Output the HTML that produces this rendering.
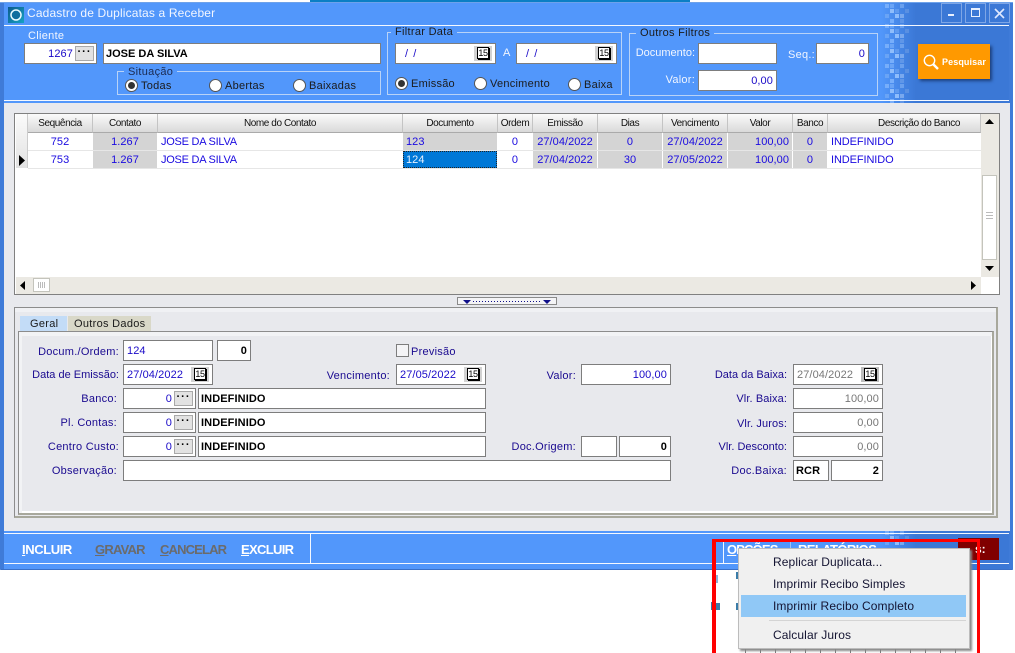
<!DOCTYPE html>
<html lang="pt"><head><meta charset="utf-8"><title>Cadastro de Duplicatas a Receber</title>
<style>
html,body{margin:0;padding:0;background:#fff;height:653px;overflow:hidden}
body{position:relative;width:1015px;font:11px "Liberation Sans",sans-serif;color:#1a0a90}
div,span,svg{position:absolute;box-sizing:border-box}
.t{white-space:nowrap;line-height:14px;letter-spacing:.25px;margin-top:1px}
.w{color:#f2f6ff}
.b{color:#1b1b1b}
.f{background:#fff;border:1px solid #7d7d7d;line-height:20px;padding:0 3px;white-space:nowrap;color:#1a0ac8;letter-spacing:.1px}
.r{text-align:right}
.bd{font-weight:bold;color:#000}
.dis{color:#777}
.g{border:1px solid #b9d3f7}
.lg{background:#5297fb;padding:0 4px;line-height:12px;white-space:nowrap;color:#f2f6ff;letter-spacing:.3px}
.rd{width:13px;height:13px;border-radius:50%;background:#fff;border:1px solid #555}
.rd.on:after{content:"";position:absolute;left:2px;top:2px;width:7px;height:7px;border-radius:50%;background:#333}
.cal{width:18px;height:15px;background:#d2d2d2}
.cal span{left:3px;top:1px;width:12px;height:12px;background:#fff;border:1px solid #000;box-shadow:1px 1px 0 #000;font:9px/11px "Liberation Sans",sans-serif;color:#000;text-align:center;letter-spacing:-.4px}
.dots{width:19px;height:15px;background:#e2e2e2;border:1px solid #a9a9a9;color:#000;font:bold 11px/11px "Liberation Sans",sans-serif;text-align:center;letter-spacing:1px}
.h{top:114px;height:19px;background:linear-gradient(#fbfbfb,#d9d9d9);border-right:1px solid #c4c4c4;border-bottom:1px solid #aaa;font-size:10px;line-height:19px;text-align:center;color:#111;letter-spacing:-.42px;white-space:nowrap}
.c{height:17px;line-height:19px;color:#1a0ae0;white-space:nowrap;letter-spacing:.05px;text-align:center}
.gc{background:#d4d4d4}
.l{text-align:left;padding-left:3px}
.rr{text-align:right;padding-right:3px}
.tb{font:bold 13px/16px "Liberation Sans",sans-serif;color:#fff;top:542px;white-space:nowrap}
.tb u{text-underline-offset:1px}
.gy{color:#6b6b6b}
.m{left:773px;font-size:12px;line-height:16px;color:#141432;white-space:nowrap;letter-spacing:.1px}
</style></head><body>

<div style="left:310px;top:0;width:380px;height:2px;background:#0b7fc4"></div>

<!-- window -->
<div style="left:0;top:2px;width:1013px;height:568px;background:linear-gradient(90deg,#5297fb 0,#5297fb 880px,#3b78d6 915px,#3b78d6 100%);border:1px solid #6ea2ea;border-bottom:1px solid #3a70c8"></div>
<div style="left:0;top:3px;width:4px;height:566px;background:#3f7bd8"></div>
<div style="left:1009px;top:3px;width:4px;height:566px;background:#3f7bd8"></div>

<!-- pixel pattern -->
<svg style="left:883px;top:3px" width="30" height="100" viewBox="0 0 30 100">
<defs><pattern id="px" width="30" height="20" patternUnits="userSpaceOnUse">
<rect x="2" y="1" width="4" height="4" fill="#77aefb"/><rect x="7" y="1" width="4" height="4" fill="#6aa4f6"/><rect x="17" y="1" width="4" height="4" fill="#6aa0ee"/>
<rect x="7" y="6" width="4" height="4" fill="#8fbdfc"/><rect x="12" y="6" width="4" height="4" fill="#5f9af0"/><rect x="22" y="6" width="4" height="4" fill="#5a90e2"/>
<rect x="2" y="11" width="4" height="4" fill="#6aa4f6"/><rect x="12" y="11" width="4" height="4" fill="#8fbdfc"/><rect x="17" y="11" width="4" height="4" fill="#79a8ee"/>
<rect x="7" y="16" width="4" height="4" fill="#77aefb"/><rect x="17" y="16" width="4" height="4" fill="#5f96e8"/>
</pattern></defs>
<rect width="30" height="100" fill="url(#px)"/></svg>
<svg style="left:883px;top:530px" width="30" height="16" viewBox="0 0 30 16"><rect width="30" height="16" fill="url(#px)"/></svg>

<!-- title -->
<div style="left:8px;top:7px;width:16px;height:16px;background:linear-gradient(135deg,#0c5a8c,#16a3c4)"></div>
<svg style="left:8px;top:7px" width="16" height="16"><circle cx="8" cy="8" r="5" fill="#0f6f9f" stroke="#e8fbff" stroke-width="1.5"/></svg>
<div class="t w" style="left:27px;top:5px;font-size:12px;line-height:14px;letter-spacing:.15px">Cadastro de Duplicatas a Receber</div>
<div style="left:941px;top:3px;width:21px;height:20px;border:1px solid #7ea6e6"></div>
<div style="left:965px;top:3px;width:21px;height:20px;border:1px solid #7ea6e6"></div>
<div style="left:989px;top:3px;width:21px;height:20px;border:1px solid #7ea6e6"></div>
<div style="left:948px;top:14px;width:6px;height:2px;background:#e8f0ff"></div>
<div style="left:971px;top:8px;width:9px;height:9px;border:1px solid #e8f0ff;border-top-width:2px"></div>
<svg style="left:994px;top:8px" width="11" height="11"><path d="M1 1L10 10M10 1L1 10" stroke="#dfe9ff" stroke-width="1.6"/></svg>
<div style="left:4px;top:25px;width:1005px;height:1px;background:#f4f8ff"></div>

<!-- header -->
<div class="t w" style="left:28px;top:28px;letter-spacing:.3px">Cliente</div>
<div class="f r" style="left:24px;top:43px;width:73px;height:21px;padding-right:23px">1267</div>
<div class="dots" style="left:75px;top:46px;height:15px">···</div>
<div class="f bd" style="left:103px;top:43px;width:278px;height:21px;padding-left:2px;letter-spacing:0">JOSE DA SILVA</div>

<div class="g" style="left:117px;top:71px;width:264px;height:24px"></div>
<div class="lg" style="left:124px;top:66px;font-size:11px;color:#1b2a50">Situação</div>
<div class="rd on" style="left:125px;top:79px"></div><div class="t b" style="left:141px;top:78px">Todas</div>
<div class="rd" style="left:209px;top:79px"></div><div class="t b" style="left:225px;top:78px">Abertas</div>
<div class="rd" style="left:293px;top:79px"></div><div class="t b" style="left:309px;top:78px">Baixadas</div>

<div class="g" style="left:387px;top:32px;width:235px;height:63px"></div>
<div class="lg" style="left:391px;top:26px;color:#1b1b1b">Filtrar Data</div>
<div class="f" style="left:395px;top:43px;width:101px;height:21px;padding-left:9px;word-spacing:2px">/ /</div>
<div class="cal" style="left:474px;top:46px"><span>15</span></div>
<div class="t w" style="left:503px;top:45px">A</div>
<div class="f" style="left:516px;top:43px;width:101px;height:21px;padding-left:9px;word-spacing:2px">/ /</div>
<div class="cal" style="left:595px;top:46px"><span>15</span></div>
<div class="rd on" style="left:395px;top:77px"></div><div class="t b" style="left:411px;top:76px">Emissão</div>
<div class="rd" style="left:474px;top:77px"></div><div class="t b" style="left:490px;top:76px">Vencimento</div>
<div class="rd" style="left:568px;top:78px"></div><div class="t b" style="left:584px;top:77px">Baixa</div>

<div class="g" style="left:629px;top:33px;width:249px;height:63px"></div>
<div class="lg" style="left:636px;top:27px;color:#1b1b1b">Outros Filtros</div>
<div class="t w" style="right:320px;top:45px;letter-spacing:0">Documento:</div>
<div class="f" style="left:698px;top:43px;width:79px;height:21px"></div>
<div class="t w" style="left:788px;top:47px">Seq.:</div>
<div class="f r" style="left:816px;top:43px;width:53px;height:21px">0</div>
<div class="t w" style="right:320px;top:72px">Valor:</div>
<div class="f r" style="left:698px;top:70px;width:79px;height:21px">0,00</div>

<div style="left:918px;top:44px;width:72px;height:35px;background:#ff9900;box-shadow:2px 2px 3px #1c3f7c"></div>
<svg style="left:922px;top:53px" width="18" height="18"><circle cx="7.5" cy="7.5" r="5.2" fill="none" stroke="#fff" stroke-width="1.4"/><path d="M11.5 11.5L16 16" stroke="#fff" stroke-width="2.4"/></svg>
<div class="t" style="left:942px;top:54px;font-weight:bold;font-size:9px;color:#fff;letter-spacing:.1px">Pesquisar</div>

<div style="left:4px;top:100px;width:1005px;height:1px;background:#f4f8ff"></div>

<!-- content -->
<div style="left:4px;top:103px;width:1006px;height:428px;background:#e8e9ed"></div>

<!-- grid -->
<div style="left:14px;top:113px;width:986px;height:182px;background:#fff;border:1px solid #808080"></div>
<div style="left:16px;top:114px;width:12px;height:54px;background:linear-gradient(#fbfbfb,#e2e2e2);border-right:1px solid #ccc"></div>
<div class="h" style="left:28px;width:65px">Sequência</div>
<div class="h" style="left:93px;width:65px">Contato</div>
<div class="h" style="left:158px;width:245px">Nome do Contato</div>
<div class="h" style="left:403px;width:95px">Documento</div>
<div class="h" style="left:498px;width:35px">Ordem</div>
<div class="h" style="left:533px;width:65px">Emissão</div>
<div class="h" style="left:598px;width:65px">Dias</div>
<div class="h" style="left:663px;width:65px">Vencimento</div>
<div class="h" style="left:728px;width:65px">Valor</div>
<div class="h" style="left:793px;width:35px">Banco</div>
<div class="h" style="left:828px;width:153px;padding-left:30px">Descrição do Banco</div>

<div style="left:28px;top:150px;width:953px;height:1px;background:#e6e6e6"></div>
<div style="left:28px;top:168px;width:953px;height:1px;background:#e6e6e6"></div>

<div class="c" style="left:28px;top:133px;width:64px">752</div>
<div class="c gc" style="left:93px;top:133px;width:64px">1.267</div>
<div class="c l" style="left:158px;top:133px;width:244px;letter-spacing:-.25px">JOSE DA SILVA</div>
<div class="c gc l" style="left:403px;top:133px;width:94px">123</div>
<div class="c" style="left:498px;top:133px;width:34px">0</div>
<div class="c gc" style="left:533px;top:133px;width:64px">27/04/2022</div>
<div class="c gc" style="left:598px;top:133px;width:64px">0</div>
<div class="c gc" style="left:663px;top:133px;width:64px">27/04/2022</div>
<div class="c gc rr" style="left:728px;top:133px;width:64px">100,00</div>
<div class="c gc" style="left:793px;top:133px;width:34px">0</div>
<div class="c l" style="left:828px;top:133px;width:153px;letter-spacing:-.1px">INDEFINIDO</div>

<svg style="left:19px;top:155px" width="7" height="11"><path d="M0 0L6 5.5L0 11Z" fill="#000"/></svg>
<div class="c" style="left:28px;top:151px;width:64px">753</div>
<div class="c gc" style="left:93px;top:151px;width:64px">1.267</div>
<div class="c l" style="left:158px;top:151px;width:244px;letter-spacing:-.25px">JOSE DA SILVA</div>
<div class="c l" style="left:403px;top:151px;width:94px;background:#0078d7;color:#e4f0ff;outline:1px dotted #222;outline-offset:-1px">124</div>
<div class="c" style="left:498px;top:151px;width:34px">0</div>
<div class="c gc" style="left:533px;top:151px;width:64px">27/04/2022</div>
<div class="c gc" style="left:598px;top:151px;width:64px">30</div>
<div class="c gc" style="left:663px;top:151px;width:64px">27/05/2022</div>
<div class="c gc rr" style="left:728px;top:151px;width:64px">100,00</div>
<div class="c gc" style="left:793px;top:151px;width:34px">0</div>
<div class="c l" style="left:828px;top:151px;width:153px;letter-spacing:-.1px">INDEFINIDO</div>

<!-- vertical scrollbar -->
<div style="left:981px;top:114px;width:18px;height:163px;background:#ebe9e3"></div>
<svg style="left:985px;top:119px" width="9" height="5"><path d="M4.5 0L9 5H0Z" fill="#000"/></svg>
<div style="left:982px;top:175px;width:15px;height:85px;background:#fff;border:1px solid #c4c4bc"></div>
<div style="left:986px;top:212px;width:7px;height:7px;border-top:1px solid #bbb;border-bottom:1px solid #bbb"></div>
<div style="left:986px;top:215px;width:7px;height:1px;background:#bbb"></div>
<svg style="left:985px;top:266px" width="9" height="5"><path d="M0 0H9L4.5 5Z" fill="#000"/></svg>
<!-- horizontal scrollbar -->
<div style="left:16px;top:277px;width:965px;height:17px;background:#ebe9e3"></div>
<svg style="left:20px;top:281px" width="5" height="9"><path d="M5 0L0 4.5L5 9Z" fill="#000"/></svg>
<div style="left:33px;top:278px;width:17px;height:14px;background:#fff;border:1px solid #c4c4bc"></div>
<div style="left:38px;top:282px;width:7px;height:6px;background:repeating-linear-gradient(90deg,#bbb 0 1px,#fff 1px 2px)"></div>
<svg style="left:971px;top:281px" width="5" height="9"><path d="M0 0L5 4.5L0 9Z" fill="#000"/></svg>

<!-- splitter -->
<div style="left:457px;top:297px;width:100px;height:8px;background:#f4f4f6;border:1px solid #8a8a8a"></div>
<svg style="left:463px;top:300px" width="8" height="4"><path d="M0 0H8L4 4Z" fill="#10108a"/></svg>
<svg style="left:543px;top:300px" width="8" height="4"><path d="M0 0H8L4 4Z" fill="#10108a"/></svg>
<div style="left:473px;top:301px;width:68px;height:1px;background:repeating-linear-gradient(90deg,#10108a 0 1px,transparent 1px 3px)"></div>

<!-- tab panel -->
<div style="left:14px;top:307px;width:984px;height:211px;background:#e8e9ed;border:1px solid #8c8c8c;border-right:2px solid #a8a89c;border-bottom:2px solid #a8a89c;box-shadow:inset 0 4px 0 #f0f1f4"></div>
<div style="left:20px;top:316px;width:47px;height:15px;background:#c3dcf7"></div>
<div style="left:68px;top:316px;width:83px;height:15px;background:#d9d8c8"></div>
<div class="t b" style="left:30px;top:316px;letter-spacing:.3px">Geral</div>
<div class="t b" style="left:74px;top:316px;letter-spacing:.3px">Outros Dados</div>
<div style="left:18px;top:331px;width:976px;height:184px;border:1px solid #8c8c8c;border-right:2px solid #a8a89c;border-bottom:2px solid #a8a89c;box-shadow:inset 3px 4px 0 #f2f3f5,inset -1px -2px 0 #fff"></div>

<!-- form -->
<div class="t" style="right:896px;top:344px">Docum./Ordem:</div>
<div class="f" style="left:123px;top:340px;width:90px;height:21px">124</div>
<div class="f r bd" style="left:217px;top:340px;width:34px;height:21px">0</div>
<div style="left:396px;top:344px;width:13px;height:13px;background:#f4f4f6;border:1px solid #7d7d7d"></div>
<div class="t" style="left:411px;top:344px">Previsão</div>

<div class="t" style="right:896px;top:367px;letter-spacing:0">Data de Emissão:</div>
<div class="f" style="left:123px;top:364px;width:90px;height:21px">27/04/2022</div>
<div class="cal" style="left:191px;top:367px"><span>15</span></div>
<div class="t" style="right:625px;top:368px">Vencimento:</div>
<div class="f" style="left:396px;top:364px;width:90px;height:21px">27/05/2022</div>
<div class="cal" style="left:464px;top:367px"><span>15</span></div>
<div class="t" style="right:439px;top:368px">Valor:</div>
<div class="f r" style="left:581px;top:364px;width:90px;height:21px">100,00</div>
<div class="t" style="right:228px;top:367px;letter-spacing:0">Data da Baixa:</div>
<div class="f dis" style="left:793px;top:364px;width:90px;height:21px">27/04/2022</div>
<div class="cal" style="left:861px;top:367px;background:#bdbdbd"><span>15</span></div>

<div class="t" style="right:898px;top:391px">Banco:</div>
<div class="f r" style="left:123px;top:388px;width:73px;height:21px;padding-right:23px">0</div>
<div class="dots" style="left:174px;top:391px">···</div>
<div class="f bd" style="left:198px;top:388px;width:288px;height:21px;padding-left:2px">INDEFINIDO</div>
<div class="t" style="right:228px;top:391px;letter-spacing:.1px">Vlr. Baixa:</div>
<div class="f r dis" style="left:793px;top:388px;width:90px;height:21px">100,00</div>

<div class="t" style="right:898px;top:415px">Pl. Contas:</div>
<div class="f r" style="left:123px;top:412px;width:73px;height:21px;padding-right:23px">0</div>
<div class="dots" style="left:174px;top:415px">···</div>
<div class="f bd" style="left:198px;top:412px;width:288px;height:21px;padding-left:2px">INDEFINIDO</div>
<div class="t" style="right:228px;top:416px;letter-spacing:.1px">Vlr. Juros:</div>
<div class="f r dis" style="left:793px;top:412px;width:90px;height:21px">0,00</div>

<div class="t" style="right:896px;top:439px">Centro Custo:</div>
<div class="f r" style="left:123px;top:436px;width:73px;height:21px;padding-right:23px">0</div>
<div class="dots" style="left:174px;top:439px">···</div>
<div class="f bd" style="left:198px;top:436px;width:288px;height:21px;padding-left:2px">INDEFINIDO</div>
<div class="t" style="right:439px;top:439px">Doc.Origem:</div>
<div class="f" style="left:581px;top:436px;width:36px;height:21px"></div>
<div class="f r bd" style="left:619px;top:436px;width:52px;height:21px">0</div>
<div class="t" style="right:228px;top:439px;letter-spacing:0">Vlr. Desconto:</div>
<div class="f r dis" style="left:793px;top:436px;width:90px;height:21px">0,00</div>

<div class="t" style="right:898px;top:463px">Observação:</div>
<div class="f" style="left:123px;top:460px;width:548px;height:21px"></div>
<div class="t" style="right:228px;top:463px">Doc.Baixa:</div>
<div class="f bd" style="left:793px;top:460px;width:36px;height:21px;padding-left:2px">RCR</div>
<div class="f r bd" style="left:831px;top:460px;width:52px;height:21px">2</div>

<!-- toolbar -->
<div style="left:4px;top:533px;width:1005px;height:1px;background:#f4f8ff"></div>
<div style="left:4px;top:563px;width:1005px;height:1px;background:#f4f8ff"></div>
<div style="left:310px;top:534px;width:1px;height:29px;background:#f4f8ff"></div>
<div class="tb" style="left:22px;letter-spacing:-.4px"><u>I</u>NCLUIR</div>
<div class="tb gy" style="left:95px;letter-spacing:-.77px"><u>G</u>RAVAR</div>
<div class="tb gy" style="left:160px;letter-spacing:-.85px"><u>C</u>ANCELAR</div>
<div class="tb" style="left:241px;letter-spacing:-.67px"><u>E</u>XCLUIR</div>
<div class="tb" style="left:727px;letter-spacing:-.85px"><u>O</u>PÇÕES</div>
<div style="left:723px;top:541px;width:1px;height:22px;background:#f4f8ff"></div>
<div style="left:790px;top:541px;width:1px;height:22px;background:#9fc2f4"></div>
<div class="tb" style="left:798px;letter-spacing:-.6px">RELATÓRIOS</div>
<div style="left:958px;top:538px;width:41px;height:22px;background:#800000"></div>
<div class="tb" style="left:975px;top:541px;font-size:12px">s:</div>

<!-- marks below window -->
<div style="left:716px;top:575px;width:2px;height:8px;background:#8cb4d8"></div>
<div style="left:711px;top:602px;width:1px;height:8px;background:#3a7ca8"></div>
<div style="left:716px;top:603px;width:4px;height:7px;background:#3a7ca8"></div>
<div style="left:736px;top:603px;width:2px;height:7px;background:#3a7ca8"></div>
<div style="left:736px;top:572px;width:2px;height:7px;background:#3a7ca8"></div>
<div style="left:745px;top:649px;width:225px;height:4px;background:repeating-linear-gradient(90deg,#777 0 1px,transparent 1px 15px)"></div>

<!-- red highlight -->
<div style="left:712px;top:539px;width:268px;height:114px;border:solid #f00;border-width:3px 3px 0 4px"></div>

<!-- context menu -->
<div style="left:738px;top:548px;width:232px;height:101px;background:#f0f0f0;border:1px solid #bcbcbc;box-shadow:2px 2px 2px #888"></div>
<div style="left:741px;top:595px;width:225px;height:22px;background:#90c8f6"></div>
<div style="left:769px;top:620px;width:197px;height:1px;background:#d4d4d4"></div>
<div class="m" style="top:554px">Replicar Duplicata...</div>
<div class="m" style="top:576px">Imprimir Recibo Simples</div>
<div class="m" style="top:598px">Imprimir Recibo Completo</div>
<div class="m" style="top:627px">Calcular Juros</div>

</body></html>
